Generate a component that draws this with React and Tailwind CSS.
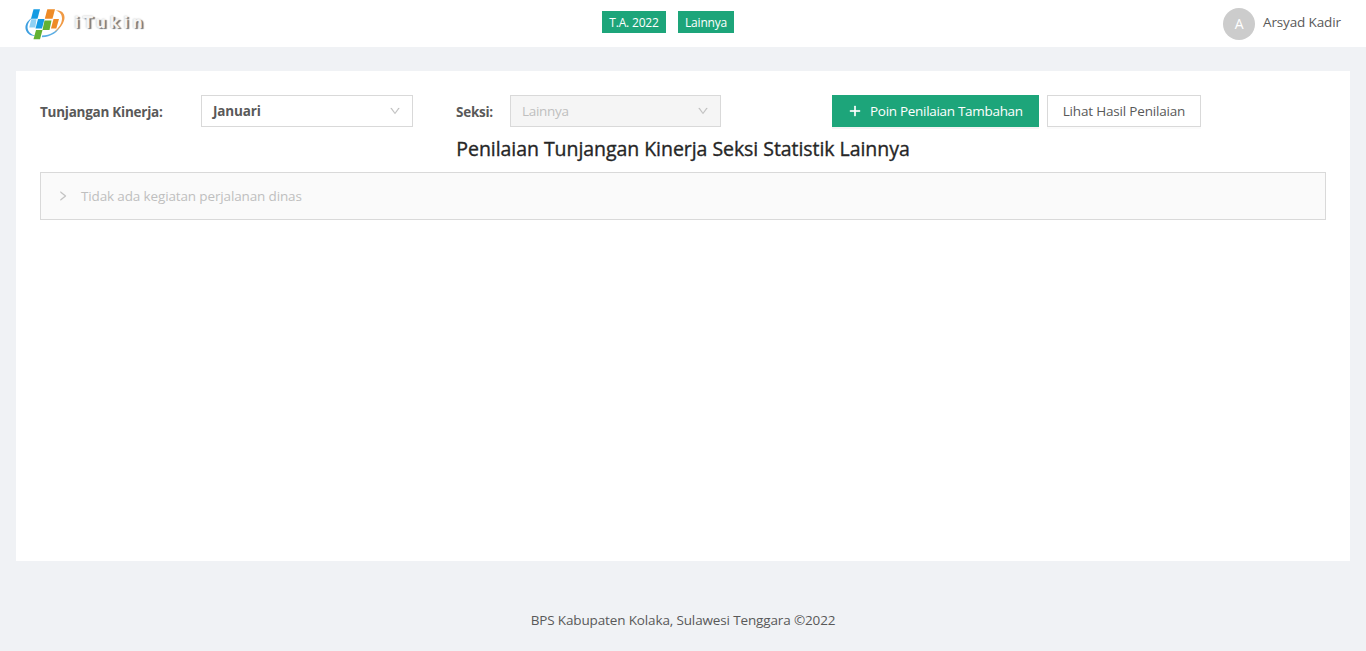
import { AiOutlineDown, AiOutlinePlus, AiOutlineRight } from "react-icons/ai";

function Logo() {
  return (
    <svg width="40" height="32" viewBox="0 0 40 32" className="shrink-0" aria-hidden="true">
      <path d="M7 10C2.500 12.500-.5 17 .7 21.500C2 26 6 28 10.500 28C5.500 26.500 2.500 23 2.500 19C2.500 15.500 4.500 12.500 7 10Z" fill="#3d9fe0" />
      <path d="M17 27.500C25 27.500 33 22.500 36 17C33.500 24 26 29 17 29.300Z" fill="#5aaee5" />
      <path d="M30.500 2.600C36.500 1.800 40.500 5.500 39.300 11.500C38 17 34 21.500 29 24C33.500 20 37 15.500 37 10.500C37 6.500 35 3.800 30.500 2.600Z" fill="#f09a45" />
      <path d="M8.500 1.300H15L12.500 10.800H6Z" fill="#149be3" />
      <path d="M6.200 11.300H11.500L10.300 19.500H4.200Z" fill="#8fd0f3" />
      <path d="M13 11H19.500L17 20.500H10.500Z" fill="#149be3" />
      <path d="M22.300 1.300H30L27.500 10.800H19.800Z" fill="#ee8b27" />
      <path d="M28.500 11H34L31.300 20.500H26Z" fill="#ee8b27" />
      <path d="M19.500 12.500H26.500L24.500 22H17.500Z" fill="#62b132" />
      <path d="M11 22H17.500L15 31.300H8.500Z" fill="#62b132" />
    </svg>
  );
}

function Tag({ children, className }) {
  return (
    <span className={`flex h-[22px] items-center justify-center bg-[#1da57a] pt-px text-[12px] tracking-[-0.2px] text-white ${className}`}>
      {children}
    </span>
  );
}

export default function App() {
  return (
    <div className="flex h-[651px] w-full flex-col bg-[#f0f2f5] font-['Open_Sans','Noto_Sans',sans-serif] text-[13.5px] leading-[22px] tracking-[-0.14px] text-[#595959]">
      <header className="flex h-[47px] shrink-0 items-start bg-white pr-[24px] pl-[25px]">
        <div className="flex w-[180px] items-start pt-[8px]">
          <Logo />
          <span className="ml-[9px] pt-[4px] font-['DejaVu_Sans'] text-[15px] leading-[22px] font-bold tracking-[3.7px] text-[#f4f4f4] [text-shadow:2px_1px_1px_#777,0_0_2px_#bbb]">
            iTukin
          </span>
        </div>
        <div className="ml-[397px] flex gap-3 pt-[11px]">
          <Tag className="w-[64px]">T.A. 2022</Tag>
          <Tag className="w-[56px]">Lainnya</Tag>
        </div>
        <div className="ml-auto flex w-[119px] items-start gap-2 pt-[8px]">
          <span className="flex size-8 shrink-0 items-center justify-center rounded-full bg-[#ccc] text-[14px] text-white">A</span>
          <span className="pt-[3px] whitespace-nowrap">Arsyad Kadir</span>
        </div>
      </header>

      <main className="mx-4 mt-6 h-[490px] shrink-0 bg-white p-6">
        <div className="flex h-8 items-center">
          <span className="w-[161px] pt-[2px] font-bold tracking-[-0.25px]">Tunjangan Kinerja:</span>
          <div className="flex h-8 w-[212px] items-center justify-between border border-[#d9d9d9] pr-[11px] pl-[11px] font-bold tracking-[-0.15px]">
            <span>Januari</span>
            <AiOutlineDown size={12} color="#bfbfbf" strokeWidth={15} />
          </div>
          <span className="ml-[43px] w-[54px] pt-[2px] font-bold tracking-[-0.25px]">Seksi:</span>
          <div className="flex h-8 w-[211px] items-center justify-between border border-[#d9d9d9] bg-[#f5f5f5] pr-[11px] pl-[11px] tracking-[-0.3px] text-[#bfbfbf]">
            <span>Lainnya</span>
            <AiOutlineDown size={12} strokeWidth={15} />
          </div>
          <button className="ml-[111px] flex h-8 w-[207px] items-center gap-2 bg-[#1da57a] pl-4 tracking-[-0.3px] whitespace-nowrap text-white shadow-[0_2px_0_rgba(0,0,0,0.045)]">
            <AiOutlinePlus size={14} strokeWidth={50} />
            <span>Poin Penilaian Tambahan</span>
          </button>
          <button className="ml-2 flex h-8 w-[154px] items-center justify-center border border-[#d9d9d9] bg-white tracking-[-0.18px] whitespace-nowrap shadow-[0_2px_0_rgba(0,0,0,0.016)]">
            Lihat Hasil Penilaian
          </button>
        </div>
        <h1 className="mt-2 text-center text-[19.5px] leading-[28px] font-normal tracking-[-0.05px] text-[#262626] [-webkit-text-stroke:0.35px_#262626]">
          Penilaian Tunjangan Kinerja Seksi Statistik Lainnya
        </h1>
        <div className="mt-[9px] flex h-12 items-center border border-[#d9d9d9] bg-[#fafafa] pl-4 text-[#bfbfbf]">
          <AiOutlineRight size={12} strokeWidth={25} />
          <span className="ml-3">Tidak ada kegiatan perjalanan dinas</span>
        </div>
      </main>

      <footer className="pt-12 text-center">BPS Kabupaten Kolaka, Sulawesi Tenggara ©2022</footer>
    </div>
  );
}
